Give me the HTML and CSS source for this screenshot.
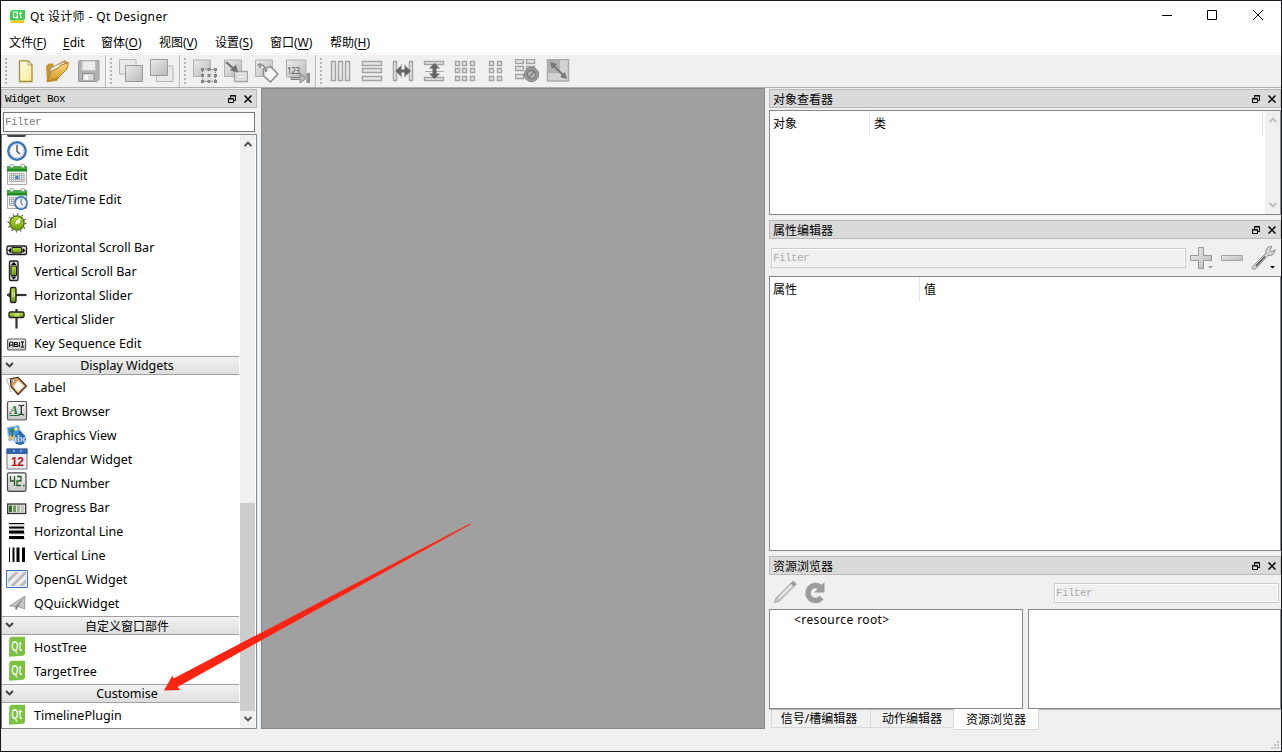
FILE: index.html
```html
<!DOCTYPE html>
<html lang="zh-CN">
<head>
<meta charset="utf-8">
<title>Qt 设计师 - Qt Designer</title>
<link rel="stylesheet" href="styles.css">
</head>
<body>
<svg class="defs" width="0" height="0">
  <defs>
    <linearGradient id="gray" x1="0" y1="0" x2="1" y2="1"><stop offset="0" stop-color="#ececec"/><stop offset="1" stop-color="#b8b8b8"/></linearGradient>
    <linearGradient id="paper" x1="0" y1="0" x2="1" y2="1"><stop offset="0" stop-color="#fffef0"/><stop offset="1" stop-color="#fbe98a"/></linearGradient>
    <linearGradient id="gold" x1="0" y1="0" x2="0" y2="1"><stop offset="0" stop-color="#f5d67b"/><stop offset="1" stop-color="#d29a26"/></linearGradient>
    <linearGradient id="green" x1="0" y1="0" x2="0" y2="1"><stop offset="0" stop-color="#b4dc3c"/><stop offset="1" stop-color="#6f9a10"/></linearGradient>
    <linearGradient id="steel" x1="0" y1="0" x2="0" y2="1"><stop offset="0" stop-color="#fafafa"/><stop offset="1" stop-color="#c4c6c4"/></linearGradient>
  </defs>
  <symbol id="float" viewBox="0 0 8 8"><path d="M2.500 3V.5H7.500V5.500H6M2 1H8" fill="none" stroke="#000"/><path d="M.5 3.500H5.500V7.500H.5ZM0 4H6" fill="none" stroke="#000"/></symbol>
  <symbol id="close" viewBox="0 0 8 8"><path d="M.5.5 7.500 7.500M7.500.5.5 7.500" stroke="#000" stroke-width="1.500"/></symbol>
  <symbol id="down" viewBox="0 0 8 6"><path d="M.6 1 4 4.400 7.400 1" fill="none" stroke="currentColor" stroke-width="2"/></symbol>
  <symbol id="up" viewBox="0 0 8 6"><path d="M.6 5 4 1.600 7.400 5" fill="none" stroke="currentColor" stroke-width="2"/></symbol>
  <symbol id="qt" viewBox="0 0 22 22"><path d="M3.300 2.500 5.200.7H19V18L17.200 19.700 3 20.700Z" fill="#7cc142"/><g transform="translate(5.300 14.500) scale(.75 1.120)"><text font-family="Open Sans" font-size="12" font-weight="600" fill="#fff">Qt</text></g></symbol>
  <symbol id="clock" viewBox="0 0 20 20"><circle cx="10" cy="10" r="8.700" fill="#f4f6f8" stroke="#3a74b6" stroke-width="2.400"/><circle cx="10" cy="10" r="7" fill="none" stroke="#b9c8da"/><path d="M10 4V10.500L13 13" fill="none" stroke="#444" stroke-width="1.300"/></symbol>
  <symbol id="calendar" viewBox="0 0 22 22"><path d="M1.500 5H20.500V20.500H1.500Z" fill="#f5f5f5" stroke="#aaa"/><path d="M1 2H21V7H1Z" fill="#3fae3f"/><path d="M1 5H21V7.500H1Z" fill="#1f8a22"/><rect x="4" y=".3" width="3.500" height="3.500" rx="1" fill="#e8ece8" stroke="#777" stroke-width=".6"/><rect x="15" y=".3" width="3.500" height="3.500" rx="1" fill="#e8ece8" stroke="#777" stroke-width=".6"/><path d="M3.500 9.500H18.500M3.500 11.500H18.500M3.500 13.500H18.500M3.500 15.500H18.500M3.500 17.500H18.500M3.500 9.500V17.500M5.500 9.500V17.500M7.500 9.500V17.500M9.500 9.500V17.500M11.500 9.500V17.500M13.500 9.500V17.500M15.500 9.500V17.500M18 9.500V17.500" stroke="#a5a5a5" stroke-width=".8"/></symbol>
</svg>

<div class="window">
  <header class="titlebar">
    <svg class="app-icon" width="15" height="13" viewBox="0 0 15 13"><path d="M2 0H15V8.500L13 10.500H0V2Z" fill="#41cd52"/><path d="M1 10.500H12.500L14 9V13H1Z" fill="#f6c713"/><g fill="none" stroke="#fff" stroke-width="1.100"><path d="M4.500 2H7.300V7.500H3.600V2H5M6 6.500 7.500 9M10.500 1.500V7.500H12M9 3.500H12"/></g></svg>
    <span class="caption">Qt 设计师 - Qt Designer</span>
    <svg class="win-controls" width="106" height="12" viewBox="0 0 106 12"><path d="M1 5.500H11M46.500 .5H55.500V9.500H46.500ZM92 0 102 10M102 0 92 10" fill="none" stroke="#000"/></svg>
  </header>
  <nav class="menubar">
    <span class="m54">文件(<u>F</u>)</span><span class="m38"><u>E</u>dit</span><span class="m58">窗体(<u>O</u>)</span><span class="m56">视图(<u>V</u>)</span><span class="m55">设置(<u>S</u>)</span><span class="m60">窗口(<u>W</u>)</span><span>帮助(<u>H</u>)</span>
  </nav>

  <div class="toolbars">
    <div class="tb tb-file"><i class="grip"></i>
      <svg viewBox="0 0 24 24"><path d="M5.500 1.800H14L18 6V22.500H5.500Z" fill="url(#paper)" stroke="#a58d3a" stroke-width="1.300"/><path d="M14 2V6H18Z" fill="#fff" stroke="#9a8a4a" stroke-width=".8"/></svg>
      <svg viewBox="0 0 24 24"><path d="M1 7 4 4.500H8L9 7 20 1 23 4 12 22 2 23Z" fill="#c8962f"/><path d="M4 18 6 9 19 3 20.500 6 7 18Z" fill="#f4f4f4" stroke="#999" stroke-width=".7"/><path d="M2 22.500 6.500 12 13 9 15 6.500 23.500 3.500 22 10 13 19Z" fill="url(#gold)" stroke="#a97413" stroke-width=".9"/></svg>
      <svg viewBox="0 0 24 24"><path d="M3.500 1.500H23V20.500L21 22.500H2.500V3Z" fill="#b2b2b2" stroke="#9a9a9a"/><path d="M6 2H19.500V11.500H6Z" fill="#ececec" stroke="#bdbdbd"/><path d="M6.500 14.500H18V22H6.500Z" fill="#d9d9d9" stroke="#8f8f8f"/><path d="M8.500 16H12V21H8.500Z" fill="#f8f8f8"/></svg>
    </div>
    <div class="tb tb-order"><i class="grip"></i>
      <svg viewBox="0 0 24 24"><path d="M.5 .5H17V15H.5Z" fill="#e9e9e9" stroke="#b5b5b5"/><path d="M6.500 6.500H23.500V22.500H6.500Z" fill="url(#gray)" stroke="#999"/></svg>
      <svg viewBox="0 0 24 24"><path d="M6.500 7H23V22.500H6.500Z" fill="#e9e9e9" stroke="#b5b5b5"/><path d="M.5 .5H17.500V16.500H.5Z" fill="url(#gray)" stroke="#999"/></svg>
    </div>
    <div class="tb tb-mode"><i class="grip"></i>
      <svg viewBox="0 0 24 24"><path d="M.5 1H17.500V17.500H.5Z" fill="url(#gray)" stroke="#b0b0b0"/><path d="M9.500 10.500H22.500V22.500H9.500Z" fill="#e2e2e2" stroke="#888" stroke-dasharray="1.500 1"/><path d="M8 9H11V12H8ZM14.500 9H17.500V12H14.500ZM21 9H24V12H21ZM8 15H11V18H8ZM14.500 15H17.500V18H14.500ZM21 15H24V18H21ZM8 21H11V24H8ZM14.500 21H17.500V24H14.500ZM21 21H24V24H21Z" fill="#858585"/></svg>
      <svg viewBox="0 0 24 24"><path d="M.5 1H17.500V17.500H.5Z" fill="url(#gray)" stroke="#b0b0b0"/><path d="M10.500 12.500H23.500V22.500H10.500Z" fill="#e5e5e5" stroke="#a5a5a5" stroke-width="1.400"/><path d="M13 16.500H21V19H13Z" fill="#fff" stroke="#aaa" stroke-width=".6"/><path d="M2 3 10 10" stroke="#707070" stroke-width="2.200"/><path d="M14 13.500 6 11.500 12 5.500Z" fill="#707070"/></svg>
      <svg viewBox="0 0 24 24"><path d="M.5 1H17.500V17.500H.5Z" fill="url(#gray)" stroke="#b0b0b0"/><path d="M2 6H8L11 10M5 4V9" fill="none" stroke="#777" stroke-width="1.200"/><path d="M8.500 10 15.500 7.500 23 15 15.500 23 8.500 17Z" fill="#ececec" stroke="#8c8c8c" stroke-width="1.500"/><path d="M15.500 9.500 21 15 15.500 21 11 16Z" fill="#fafafa"/><circle cx="11" cy="11.500" r="1.300" fill="#777"/></svg>
      <svg viewBox="0 0 24 24"><path d="M.5 1H20V18H.5Z" fill="url(#gray)" stroke="#b0b0b0"/><text x="1" y="15" font-family="Noto Sans" font-size="8" fill="#555" textLength="13">123</text><path d="M5 18.500H14V14.500L20 19.500 14 24V20.500H5Z" fill="#bbb" stroke="#858585"/><path d="M21 14.500H23.500V23.500H21Z" fill="#999" stroke="#888"/></svg>
    </div>
    <div class="tb tb-layout"><i class="grip"></i>
      <svg viewBox="0 0 24 24"><path class="cell" d="M2.500 2.500H6.500V21.500H2.500ZM9.500 2.500H13.500V21.500H9.500ZM16.500 2.500H20.500V21.500H16.500Z"/></svg>
      <svg viewBox="0 0 24 24"><path class="cell" d="M2.500 2.500H21.500V6.500H2.500ZM2.500 9.500H21.500V13.500H2.500ZM2.500 17.500H21.500V21.500H2.500Z"/></svg>
      <svg viewBox="0 0 24 24"><path class="cell" d="M2.500 2.500H5.500V21.500H2.500ZM18.500 2.500H21.500V21.500H18.500Z"/><path d="M10.500 5V19M13.500 5V19" stroke="#b0b0b0"/><path d="M4.500 12 10 6.500V10.500H14V6.500L20 12 14 17.500V13.500H10V17.500Z" fill="#666"/></svg>
      <svg viewBox="0 0 24 24"><path class="cell" d="M2.500 2.500H21.500V5.500H2.500ZM2.500 18.500H21.500V21.500H2.500Z"/><path d="M3 12.500H22" stroke="#aaa"/><path d="M12.500 4 18 9.500H14.500V14.500H18L12.500 20 7 14.500H10.500V9.500H7Z" fill="#666"/></svg>
      <svg viewBox="0 0 24 24"><path class="cell" d="M2.500 2.500H6.500V6.500H2.500ZM9.500 2.500H13.500V6.500H9.500ZM17.500 2.500H21.500V6.500H17.500ZM2.500 9.500H6.500V13.500H2.500ZM9.500 9.500H13.500V13.500H9.500ZM17.500 9.500H21.500V13.500H17.500ZM2.500 17.500H6.500V21.500H2.500ZM9.500 17.500H13.500V21.500H9.500ZM17.500 17.500H21.500V21.500H17.500Z"/></svg>
      <svg viewBox="0 0 24 24"><path class="cell" d="M5.500 2.500H9.500V6.500H5.500ZM13.500 2.500H17.500V6.500H13.500ZM5.500 9.500H9.500V13.500H5.500ZM13.500 9.500H17.500V13.500H13.500ZM5.500 17.500H9.500V21.500H5.500ZM13.500 17.500H17.500V21.500H13.500Z"/></svg>
      <svg viewBox="0 0 24 24"><path class="cell" d="M.5 .5H8.500V4.500H.5ZM11.500 .5H19.500V4.500H11.500ZM.5 7.500H8.500V11.500H.5ZM11.500 7.500H19.500V11.500H11.500ZM.5 15.500H8.500V19.500H.5Z"/><circle cx="16.500" cy="15.500" r="7.200" fill="#999" stroke="#858585"/><circle cx="16.500" cy="15.500" r="4" fill="#bcbcbc" stroke="#777" stroke-width="1.300"/><path d="M13.500 18.500 19.500 12.500" stroke="#777" stroke-width="1.500"/></svg>
      <svg viewBox="0 0 24 24"><path d="M1.500 .5H22.500V22H1.500Z" fill="#d2d2d2" stroke="#aaa" stroke-width="1.500"/><path d="M2 1H14V14H2Z" fill="#b0b0b0"/><path d="M7 6 18 17" stroke="#777" stroke-width="2"/><path d="M4 3 11 5 6 10ZM21 20 14 18 19 13Z" fill="#777"/></svg>
    </div>
  </div>

  <main class="main">
    <aside class="widget-box">
      <div class="dock-title"><span class="mono">Widget Box</span><svg><use href="#float"/></svg><svg><use href="#close"/></svg></div>
      <div class="filter filter-widgets">Filter</div>
      <div class="tree">
        <div class="rows">
          <div class="stub"><i></i></div>
          <div class="row"><svg viewBox="0 0 22 22"><use href="#clock" x="1" y="1" width="20" height="20"/></svg><span>Time Edit</span></div>
          <div class="row"><svg viewBox="0 0 22 22"><use href="#calendar" width="22" height="22"/><path d="M9.500 12H12.500V15H9.500Z" fill="#3b7ed8"/></svg><span>Date Edit</span></div>
          <div class="row"><svg viewBox="0 0 22 22"><use href="#calendar" width="22" height="22"/><use href="#clock" x="8" y="8" width="14" height="14"/></svg><span>Date/Time Edit</span></div>
          <div class="row"><svg viewBox="0 0 22 22"><circle cx="11" cy="11" r="8.800" fill="none" stroke="#555" stroke-width="1.600" stroke-dasharray="1.200 3.400"/><circle cx="11" cy="11" r="7.200" fill="url(#green)" stroke="#4d6b12" stroke-width="1.300"/><path d="M14.500 6 13.500 11 9.500 12.500 10 9Z" fill="#fff"/></svg><span>Dial</span></div>
          <div class="row"><svg viewBox="0 0 22 22"><rect x="1" y="10" width="19.500" height="8.500" rx="1.500" fill="#ddd" stroke="#222" stroke-width="1.400"/><path d="M6 11.500H15.500V17H6Z" fill="url(#green)" stroke="#222"/><path d="M5 12V17L2 14.500ZM16.500 12V17L19.500 14.500Z"/></svg><span>Horizontal Scroll Bar</span></div>
          <div class="row"><svg viewBox="0 0 22 22"><rect x="3.500" y="1" width="8.500" height="19.500" rx="1.500" fill="#ddd" stroke="#222" stroke-width="1.400"/><path d="M5 6H10.500V15.500H5Z" fill="url(#green)" stroke="#222"/><path d="M5 5H10.500L7.700 2ZM5 16.500H10.500L7.700 19.500Z"/></svg><span>Vertical Scroll Bar</span></div>
          <div class="row"><svg viewBox="0 0 22 22"><path d="M1 11H20.500" stroke="#333" stroke-width="2.200"/><path d="M4 8 1 11 4 14" fill="#444"/><rect x="4.500" y="3.500" width="5.500" height="15" rx="1.500" fill="url(#green)" stroke="#222" stroke-width="1.400"/><path d="M6.500 8V13.500M8.300 8V13.500" stroke="#eff9c9" stroke-width=".8"/></svg><span>Horizontal Slider</span></div>
          <div class="row"><svg viewBox="0 0 22 22"><path d="M10.500 1V20.500" stroke="#333" stroke-width="2.200"/><rect x="3" y="4" width="15" height="5.500" rx="1.500" fill="url(#green)" stroke="#222" stroke-width="1.400"/><path d="M8 6H13.500M8 7.800H13.500" stroke="#eff9c9" stroke-width=".8"/></svg><span>Vertical Slider</span></div>
          <div class="row"><svg viewBox="0 0 22 22"><rect x="1.600" y="7" width="18" height="11" rx="1.500" fill="url(#steel)" stroke="#555" stroke-width="1.200"/><g fill="none" stroke="#111" stroke-width="1.100"><path d="M3.500 15V11L4.500 10H6L7 11V15M3.500 13H7M8.500 14.500V10.500H11L11.500 12 11 12.500H8.500M11 12.500 12 13.500 11.500 14.500H8.500M13.500 10V15M15 9.500 16.500 10.500 18 9.500M16.500 10.500V14.500M15 15.500 16.500 14.500 18 15.500"/></g></svg><span>Key Sequence Edit</span></div>
          <div class="category"><svg><use href="#down"/></svg><span>Display Widgets</span></div>
          <div class="row"><svg viewBox="0 0 22 22"><path d="M4.500 2.500 12 1.500 20.500 10 12 18.500 5 10.500Z" fill="#e9a052" stroke="#3b2d20" stroke-width="1.200"/><path d="M12 4.500 18 10 12 16 7.500 10.500Z" fill="#fff"/><circle cx="7.500" cy="5" r="1.400" fill="#fff" stroke="#333" stroke-width=".5"/><path d="M7 4.500C0 .5 0 4 2 7S3 14 5.500 16" fill="none" stroke="#999" stroke-width=".8"/></svg><span>Label</span></div>
          <div class="row"><svg viewBox="0 0 22 22"><rect x="1.500" y="1.500" width="19" height="18.500" rx="1.500" fill="url(#steel)" stroke="#555" stroke-width="1.200"/><text x="3.500" y="14" font-family="Liberation Serif" font-size="13" font-style="italic" font-weight="700" fill="#277035">A</text><path d="M3.500 15.500H13" stroke="#277035"/><path d="M12.500 5 15.300 6 18 5M15.300 6V14M12.500 15 15.300 14 18 15" fill="none" stroke="#222" stroke-width="1.200"/></svg><span>Text Browser</span></div>
          <div class="row"><svg viewBox="0 0 22 22"><path d="M1 3.500 13 1.500 15 14 3 17Z" fill="#3f93ee" stroke="#b5cbe2"/><path d="M2.500 12 13.500 10.500 14.500 14 3.500 16Z" fill="#e2c56a"/><path d="M4 5 8 8M8 5 4 8M6.200 6V13" stroke="#3b8130" stroke-width="1.500"/><circle cx="10" cy="5" r="1.800" fill="#fff06b"/><path d="M14 6 19 13 16 19 10 17Z" fill="#1c5798"/><circle cx="14" cy="15" r="6" fill="#2c6eb4"/><text x="6" y="18" font-family="Liberation Serif" font-size="10" font-weight="700" fill="#cfe2f5" textLength="15">abc</text></svg><span>Graphics View</span></div>
          <div class="row"><svg viewBox="0 0 22 22"><path d="M1 1H21V21H1Z" fill="#eee" stroke="#777"/><path d="M.5 .5H21.500V6H.5Z" fill="#3165a9"/><path d="M7 3H9M14 3H16" stroke="#dfe9f5"/><text x="5" y="17.500" font-family="Liberation Sans" font-size="12" font-weight="700" fill="#b4151c" textLength="13">12</text></svg><span>Calendar Widget</span></div>
          <div class="row"><svg viewBox="0 0 22 22"><rect x="1.500" y=".8" width="18.500" height="18.500" rx="1.500" fill="url(#steel)" stroke="#444" stroke-width="1.200"/><path d="M4.500 4V9H8.500M8.500 4V14M11 4.500H15V9H11V13.500H15M17 13.500H18.500" fill="none" stroke="#275923" stroke-width="1.300"/></svg><span>LCD Number</span></div>
          <div class="row"><svg viewBox="0 0 22 22"><rect x="1.700" y="8" width="18" height="9.500" fill="#e3e5e0" stroke="#333" stroke-width="1.300"/><path d="M3 9.500H6V16H3Z" fill="#3a6d2d"/><path d="M7 9.500H10V16H7Z" fill="#6c9b5b"/><path d="M11 9.500H14V16H11Z" fill="#a5b99c"/><path d="M15 9.500H18V16H15Z" fill="#c1c6be"/></svg><span>Progress Bar</span></div>
          <div class="row"><svg viewBox="0 0 22 22"><path d="M4 4.500H19M4 8.500H19M4 13.500H19M4 18.500H19" stroke="#ccc" stroke-width="2"/><path d="M3 3.500H18" stroke="#000" stroke-width="1"/><path d="M3 7.500H18" stroke="#000" stroke-width="2"/><path d="M3 12H18M3 17.500H18" stroke="#000" stroke-width="3"/></svg><span>Horizontal Line</span></div>
          <div class="row"><svg viewBox="0 0 22 22"><path d="M3.500 3.500V18" stroke="#000"/><path d="M7.500 3.500V18" stroke="#000" stroke-width="2"/><path d="M12 3.500V18M17.500 3.500V18" stroke="#000" stroke-width="3"/></svg><span>Vertical Line</span></div>
          <div class="row"><svg viewBox="0 0 22 22"><path d="M.5 2.500H21.500V19.500H.5Z" fill="#ededed" stroke="#3c76bd"/><path d="M2 11 9 4H13L2 15ZM4 18 18 4H20V6L8 18ZM13 18 20 11V15L17 18Z" fill="#b9bab9"/></svg><span>OpenGL Widget</span></div>
          <div class="row"><svg viewBox="0 0 22 22"><path d="M3.500 14 19 4 18.500 17 12.500 14.500 10 18 9.500 14.500Z" fill="#c6c6c6" stroke="#8b8b8b" stroke-width=".8"/><path d="M10 17.500 18.500 4.500 9.500 14.500Z" fill="#828282"/></svg><span>QQuickWidget</span></div>
          <div class="category"><svg><use href="#down"/></svg><span class="cjk">自定义窗口部件</span></div>
          <div class="row"><svg><use href="#qt"/></svg><span>HostTree</span></div>
          <div class="row"><svg><use href="#qt"/></svg><span>TargetTree</span></div>
          <div class="category"><svg><use href="#down"/></svg><span>Customise</span></div>
          <div class="row"><svg><use href="#qt"/></svg><span>TimelinePlugin</span></div>
        </div>
        <div class="scroll"><svg><use href="#up"/></svg><i class="thumb"></i><svg><use href="#down"/></svg></div>
      </div>
    </aside>

    <section class="canvas"></section>

    <aside class="right">
      <div class="dock-title"><span>对象查看器</span><svg><use href="#float"/></svg><svg><use href="#close"/></svg></div>
      <div class="panel objects">
        <div class="heads"><span class="h-object">对象</span><span class="h-class">类</span></div>
        <div class="scroll idle"><svg><use href="#up"/></svg><svg><use href="#down"/></svg></div>
      </div>
      <div class="dock-title second"><span>属性编辑器</span><svg><use href="#float"/></svg><svg><use href="#close"/></svg></div>
      <div class="prop-tools">
        <div class="filter disabled grow">Filter</div>
        <svg width="92" height="26" viewBox="0 0 92 26"><path d="M12.500 2.500H17.500V10.500H25.500V15.500H17.500V23.500H12.500V15.500H4.500V10.500H12.500Z" fill="url(#gray)" stroke="#999"/><path d="M22 21H27L24.500 23.500Z" fill="#999"/><path d="M35.500 10.500H56.500V15.500H35.500Z" fill="url(#gray)" stroke="#a5a5a5"/><path d="M67 21 80 8C79 4 82 1 86 1.500L84 5 86 7 89 4.500C89 9 86 11 82 10.500L69.500 24C66 25 65 23 67 21Z" fill="#d0d0d0" stroke="#888" stroke-width=".9"/><path d="M70 21 79 11.500" stroke="#555" stroke-width="1.500"/><path d="M84 21H89L86.500 23.500Z"/></svg>
      </div>
      <div class="panel props"><div class="heads"><span class="h-prop">属性</span><span class="h-value">值</span></div></div>
      <div class="dock-title third"><span>资源浏览器</span><svg><use href="#float"/></svg><svg><use href="#close"/></svg></div>
      <div class="res-tools">
        <svg width="54" height="26" viewBox="0 0 54 26"><path d="M1.500 22.500 3 18 19 2C21 1 23.500 3 22.500 5L6.500 21Z" fill="#c8c8c8" stroke="#a8a8a8"/><path d="M6 18 19 5" stroke="#e5e5e5" stroke-width="2"/><path d="M17.500 3.500 19 2C21 1 23.500 3 22.500 5L21 6.500Z" fill="#999"/><path d="M48.500 17.500A7.500 7.500 0 1 1 47 7" fill="none" stroke="#9c9c9c" stroke-width="5.500"/><path d="M51.500 2V12.500H41Z" fill="#9c9c9c"/></svg>
        <div class="filter disabled res-filter">Filter</div>
      </div>
      <div class="res-panels"><div class="panel res-tree">&lt;resource root&gt;</div><div class="panel res-files"></div></div>
      <div class="tabs"><span class="tab t1">信号/槽编辑器</span><span class="tab t2">动作编辑器</span><span class="tab active">资源浏览器</span></div>
    </aside>
  </main>
  <footer class="status"><svg width="8" height="8" viewBox="0 0 8 8"><path d="M6 0H8V2H6ZM3 3H5V5H3ZM6 3H8V5H6ZM0 6H2V8H0ZM3 6H5V8H3ZM6 6H8V8H6Z" fill="#bfbfbf"/></svg></footer>
  <svg class="pointer" width="310" height="172" viewBox="162 522 310 172"><path d="M470 523.500 173.500 678.500 172.500 675.500 164 690.500 180.500 690 177.500 687 262 640 470.500 524.500Z" fill="#fe2412"/></svg>
</div>
</body>
</html>
```
FILE: styles.css
```css
* { box-sizing: border-box; }
body { margin: 0; font-family: "Noto Sans", "Noto Sans CJK SC", sans-serif; font-size: 12px; color: #000; }
.defs { position: absolute; }
.window { position: relative; width: 1282px; height: 752px; border: 1px solid #17171b; background: #f0f0f0; display: flex; flex-direction: column; overflow: hidden; white-space: nowrap; }

.titlebar { height: 30px; background: #fff; display: flex; align-items: center; padding-left: 9px; }
.caption { margin-left: 5px; margin-top: -1px; font-size: 12px; letter-spacing: .36px; }
.win-controls { margin-left: auto; margin-right: 14px; }
.menubar { height: 23px; background: #fff; display: flex; align-items: center; padding-left: 8px; border-bottom: 1px solid #f0f0f0; }
.menubar u { text-underline-offset: 2px; }
.m54 { width: 54px; } .m38 { width: 38px; } .m58 { width: 58px; } .m56 { width: 56px; } .m55 { width: 55px; } .m60 { width: 60px; }

.toolbars { height: 34px; display: flex; border-top: 1px solid #fff; border-bottom: 1px solid #aeaeae; }
.tb { display: flex; align-items: center; padding-left: 3px; border-right: 1px solid #fff; box-shadow: inset -1px 0 #b4b4b4; }
.tb-file { width: 106px; padding-left: 4px; }
.tb-order { width: 74px; }
.tb-mode { width: 136px; }
.tb-layout { flex: 1; border: 0; box-shadow: none; }
.tb svg { width: 24px; height: 24px; margin: 0 4px 0 3px; flex: none; }
.grip { width: 2px; height: 27px; margin-right: 4px; background: repeating-linear-gradient(#b4b4b4 0 2px, transparent 2px 4px); flex: none; }
.cell { fill: #e6e6e6; stroke: #a3a3a3; stroke-width: 1.400; }

.main { height: 641px; display: flex; }
.dock-title { height: 19px; background: #dadada; border: 1px solid #b9b9b9; display: flex; align-items: center; padding: 0 4px 0 3px; }
.dock-title span { flex: 1; }
.dock-title svg { width: 8px; height: 8px; margin-left: 8px; }
.mono, .filter { font-family: "Liberation Mono", monospace; font-size: 11px; letter-spacing: -.6px; }
.filter { border: 1px solid #7a7a7a; background: #fff; color: #808080; height: 20px; line-height: 19px; padding-left: 1px; }
.filter.disabled { background: #f0f0f0; border-color: #ccc; box-shadow: inset 0 0 0 1px #fff; color: #acacac; }

.widget-box { width: 256px; padding-top: 1px; display: flex; flex-direction: column; }
.filter-widgets { margin: 4px 2px 2px; }
.tree { height: 595px; border: 1px solid #828790; border-left-color: #777; background: #fff; display: flex; }
.rows { width: 237px; overflow: hidden; }
.stub { height: 4px; padding-left: 5px; }
.stub i { display: block; width: 19px; height: 2px; background: #444; border-radius: 0 0 3px 3px; }
.row { height: 24px; display: flex; align-items: center; padding-left: 4px; font-size: 12.500px; letter-spacing: .03px; }
.row svg { width: 22px; height: 22px; margin-right: 6px; }
.category { height: 19px; margin-top: 1px; display: flex; align-items: center; border-top: 1px solid #a0a0a0; border-bottom: 1px solid #a0a0a0; background: linear-gradient(#f2f2f2, #dedede); font-size: 12.500px; }
.category svg { width: 9px; height: 6px; margin: 0 1px 2px 3px; color: #404040; }
.category span { flex: 1; text-align: center; }
.category .cjk { font-size: 12px; }
.scroll { width: 15px; margin-left: 1px; background: #f0f0f0; display: flex; flex-direction: column; align-items: center; justify-content: space-between; padding: 6px 0; color: #505050; }
.scroll svg { width: 8px; height: 6px; }
.thumb { width: 15px; height: 208px; margin: auto 0 5px; background: #cdcdcd; }

.canvas { width: 504px; margin-left: 4px; background: #a0a0a0; border: 1px solid #828790; }

.right { width: 512px; margin-left: 4px; padding-top: 1px; display: flex; flex-direction: column; }
.panel { background: #fff; border: 1px solid #828790; }
.objects { height: 105px; margin-top: 2px; display: flex; }
.heads { display: flex; height: 25px; flex: 1; line-height: 25px; }
.h-object { width: 100px; padding-left: 3px; border-right: 1px solid #e5e5e5; }
.h-class { width: 393px; padding-left: 4px; border-right: 1px solid #e5e5e5; }
.h-prop { width: 150px; padding-left: 3px; border-right: 1px solid #e5e5e5; }
.h-value { padding-left: 4px; }
.idle { color: #bfbfbf; }
.second, .third { margin-top: 5px; }
.prop-tools { height: 37px; display: flex; align-items: center; padding: 0 3px 0 2px; }
.grow { flex: 1; }
.props { height: 275px; }
.res-tools { height: 34px; display: flex; align-items: center; padding: 2px 2px 0 4px; justify-content: space-between; }
.res-filter { width: 225px; }
.res-panels { display: flex; gap: 5px; height: 100px; }
.res-tree { width: 254px; padding-left: 24px; font-size: 12px; letter-spacing: .4px; line-height: 20px; }
.res-files { flex: 1; }
.tabs { height: 20px; border-top: 1px solid #b5b5b5; display: flex; align-items: flex-start; padding-left: 2px; }
.tab { height: 18px; border: 1px solid #d9d9d9; border-top: 0; line-height: 17px; text-align: center; }
.t1 { width: 100px; padding-right: 4px; }
.t2 { width: 83px; border-left: 0; }
.tab.active { width: 85px; height: 21px; margin-top: -1px; background: #fff; line-height: 21px; border-left: 0; }
.status { flex: 1; display: flex; align-items: flex-end; justify-content: flex-end; padding: 0 2px 2px; }
.pointer { position: absolute; left: 161px; top: 521px; }
```
